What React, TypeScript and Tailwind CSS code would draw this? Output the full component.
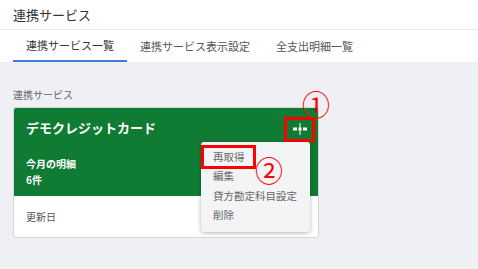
import React from "react";

const font = { fontFamily: '"Noto Sans CJK JP", "Noto Sans", sans-serif' };

export default function App() {
  return (
    <div className="w-[478px] h-[269px] overflow-hidden bg-[#eff0f4] relative" style={font}>
      <div className="h-[30px] bg-white border-b border-[#e6e7ea] flex items-center px-[13px] text-[13px] text-[#333]">
        連携サービス
      </div>
      <div className="h-[32px] bg-white flex items-stretch px-[13px] text-[11px] text-[#555]">
        <div className="px-[13px] flex items-center border-b-2 border-[#3b7dd8] text-[#333]">連携サービス一覧</div>
        <div className="px-[13px] flex items-center">連携サービス表示設定</div>
        <div className="px-[13px] flex items-center">全支出明細一覧</div>
      </div>
      <div className="px-[13px] pt-[26px]">
        <div className="text-[10px] text-[#666] leading-[14px] mb-[5px]">連携サービス</div>
        <div className="w-[306px] rounded-[3px] border border-[#d5d6d9] bg-white overflow-hidden">
          <div className="h-[88px] bg-[#107b32] px-[12px] pt-[9px] text-white">
            <div className="flex items-center justify-between h-[22px]">
              <div className="text-[13px] font-bold">デモクレジットカード</div>
              <div className="w-[31px] h-[25px] border-[3px] border-[#f00] flex items-center justify-center -mr-[9px] mt-[2px]">
                <svg width="16" height="14" viewBox="0 0 16 14">
                  <rect x="1" y="5.5" width="4" height="3" fill="white" />
                  <rect x="11" y="5.5" width="4" height="3" fill="white" />
                  <rect x="6.5" y="5.5" width="3" height="3" fill="white" />
                  <rect x="7.5" y="1" width="1" height="12" fill="white" />
                </svg>
              </div>
            </div>
            <div className="mt-[17px] text-[10px] font-bold leading-[16px]">今月の明細</div>
            <div className="text-[10px] font-bold leading-[16px]">6件</div>
          </div>
          <div className="h-[41px] px-[12px] flex items-center text-[10px] text-[#555]">更新日</div>
        </div>
      </div>

      <div className="absolute left-[201px] top-[142px] w-[109px] h-[90px] bg-[#f3f4f6] rounded-[3px] shadow-[0_1px_4px_rgba(0,0,0,0.3)] text-[10.5px] text-[#666]">
        <div className="pl-[12px] h-[19.5px] mt-[5px] flex items-center">再取得</div>
        <div className="pl-[12px] h-[19.5px] flex items-center">編集</div>
        <div className="pl-[12px] h-[19.5px] flex items-center">貸方勘定科目設定</div>
        <div className="pl-[12px] h-[19.5px] flex items-center">削除</div>
      </div>
      <div className="absolute left-[201px] top-[145px] w-[55px] h-[24px] border-[3px] border-[#f00]" />

      <div className="absolute left-[302px] top-[90px] text-[28px] leading-[28px] text-[#f00]">①</div>
      <div className="absolute left-[255px] top-[156px] text-[28px] leading-[28px] text-[#f00]">②</div>
    </div>
  );
}
